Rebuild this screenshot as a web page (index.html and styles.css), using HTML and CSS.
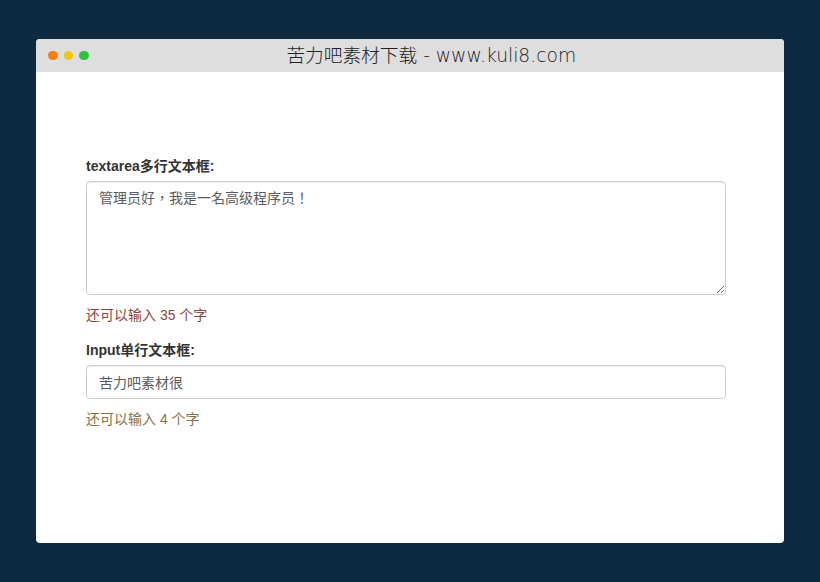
FILE: index.html
```html
<!DOCTYPE html>
<html lang="zh-CN">
<head>
<meta charset="utf-8">
<title>textarea</title>
<link rel="stylesheet" href="styles.css">
</head>
<body>
<div class="window">
  <header class="titlebar">
    <div class="dots">
      <span class="dot dot-orange"></span>
      <span class="dot dot-yellow"></span>
      <span class="dot dot-green"></span>
    </div>
    <h1 class="title">苦力吧素材下载 - www.kuli8.com</h1>
  </header>
  <main class="content">
    <form class="form">
      <div class="group">
        <label class="label" for="ta">textarea多行文本框:</label>
        <textarea class="control area" id="ta" lang="zh-TW">管理员好，我是一名高级程序员！</textarea>
        <p class="hint hint-red">还可以输入 35 个字</p>
      </div>
      <div class="group">
        <label class="label" for="inp">Input单行文本框:</label>
        <input class="control single" id="inp" type="text" value="苦力吧素材很">
        <p class="hint hint-brown">还可以输入 4 个字</p>
      </div>
    </form>
  </main>
</div>
</body>
</html>
```
FILE: styles.css
```css
* { box-sizing: border-box; }
html, body { margin: 0; height: 100%; }
body {
  background: #0e2a40;
  padding: 39px 36px;
  font-family: "Liberation Sans", "Noto Sans CJK SC", sans-serif;
  font-size: 14px;
  color: #333;
}
.window {
  height: 504px;
  background: #fff;
  border-radius: 4px;
  overflow: hidden;
  display: flex;
  flex-direction: column;
}
.titlebar {
  height: 33px;
  flex: none;
  background: #dedede;
  display: flex;
  align-items: center;
}
.dots {
  display: flex;
  flex: none;
  gap: 6px;
  padding-left: 12px;
}
.dot { width: 9.5px; height: 9.5px; border-radius: 50%; }
.dot-orange { background: #f97f0f; }
.dot-yellow { background: #f2c511; }
.dot-green { background: #2fc23c; }
.title {
  flex: 1;
  margin: 0;
  padding-right: 10px;
  text-align: center;
  font-family: "DejaVu Sans ExtraLight", "DejaVu Sans", "Noto Sans CJK SC", sans-serif;
  font-weight: 200;
  font-size: 18.7px;
  line-height: 33px;
  color: #222;
  white-space: nowrap;
}
.content { flex: 1; padding: 84px 58px 0 50px; }
.form { display: flex; flex-direction: column; gap: 15px; }
.group { display: flex; flex-direction: column; }
.label {
  font-weight: 700;
  line-height: 20px;
  margin-bottom: 5px;
  color: #333;
}
.control {
  display: block;
  width: 100%;
  border: 1px solid #ccc;
  border-radius: 4px;
  background: #fff;
  color: #5c5c5c;
  font: inherit;
  padding: 6px 12px;
  line-height: 20px;
  box-shadow: inset 0 1px 1px rgba(0,0,0,.075);
  outline: none;
}
.area {
  height: 114px;
  padding-top: 5px;
  resize: vertical;
  font-family: "Noto Sans CJK TC", sans-serif;
}
.single { height: 34px; }
.hint { margin: 10px 0 0; line-height: 20px; }
.hint-red { color: #8a4444; }
.hint-brown { color: #86704a; }
```
